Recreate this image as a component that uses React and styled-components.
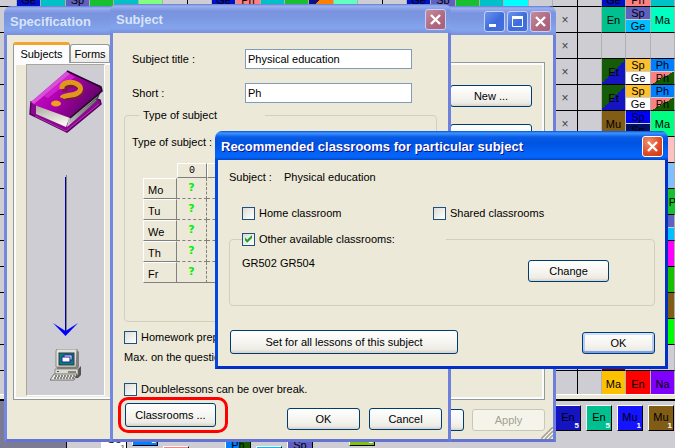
import React from 'react';
import styled, { createGlobalStyle, css } from 'styled-components';

const GlobalStyle = createGlobalStyle`
    * {
        box-sizing: border-box;
    }
    body {
        margin: 0;
        overflow: hidden;
    }
    body, button, input {
        font-family: "Liberation Sans", Arial, sans-serif;
        font-size: 11px;
        line-height: 16px;
        color: #000;
    }
`;

const Desktop = styled.div`
    position: relative;
    display: flex;
    flex-direction: column;
    height: 100vh;
    overflow: hidden;
    background-color: #cecdd3;
`;

/* ---------- timetable behind the windows ---------- */

const TimetablePane = styled.div`
    flex: 1;
    min-height: 0;
    overflow: hidden;
`;

const Timetable = styled.table`
    table-layout: fixed;
    border-collapse: separate;
    border-spacing: 0;
    width: 675px;
    margin-top: -19px;
`;

const Slot = styled.td`
    height: 26px;
    padding: 0;
    border-bottom: 1px solid #000;
    border-right: 1px solid ${({dayEnd}) => dayEnd ? "#000" : "#b0b0b0"};
    font-size: 12px;
    color: #444;
    text-align: center;
`;

const Lesson = styled.div`
    display: flex;
    flex-direction: column;
    gap: 1px;
    width: ${({wide}) => wide ? "49px" : "auto"};
    height: 25px;
`;

const Part = styled.div`
    flex: 1;
    min-height: 0;
    display: flex;
    align-items: center;
    justify-content: center;
    background: ${({fill}) => fill};
    font-size: 11px;
    line-height: 12px;
    color: #000;
`;

const Splitter = styled.div`
    height: 7px;
    background-color: #ece9d8;
    border-top: 1px solid #fff;
    border-bottom: 2px solid #000;
`;

const Tray = styled.div`
    display: flex;
    height: 47px;
    overflow: hidden;
`;

const TrayMargin = styled.div`
    width: 67px;
    background-color: #7b7b94;
    border-right: 1px solid #000;
`;

const CardRow = styled.div`
    display: flex;
    gap: 5px;
    padding: 0 1px 0 34px;
    flex: ${({grow}) => grow ? 1 : "none"};
`;

const CardBox = styled.div`
    flex: none;
    position: relative;
    width: 26px;
    height: 26px;
    margin-top: ${({drop}) => drop}px;
    padding-bottom: 2px;
    display: flex;
    align-items: center;
    justify-content: center;
    background: ${({fill}) => fill};
    border: 1px solid #fff;
    border-right-color: #000;
    border-bottom-color: #000;
`;

const Count = styled.span`
    position: absolute;
    right: 1px;
    bottom: 0;
    font-size: 8px;
    font-weight: bold;
    line-height: 8px;
    color: ${({dark}) => dark ? "#808080" : "#fff"};
`;

const CardGap = styled.div`
    width: 26px;
`;

/* ---------- window parts ---------- */

const Window = styled.section`
    position: absolute;
    left: ${({x}) => x}px;
    top: ${({y}) => y}px;
    width: ${({w}) => w}px;
    height: ${({h}) => h}px;
    display: flex;
    flex-direction: column;
`;

const TitleBar = styled.header`
    display: flex;
    align-items: center;
    gap: 2px;
    height: 29px;
    flex: none;
    padding: 2px 5px 0 6px;
    border-radius: 7px 7px 0 0;
    background: ${({active}) => active
        ? "linear-gradient(#0a4fd0 0, #3c96ff 2px, #0a5ce6 6px, #0053e1 12px, #0462f6 22px, #0466fb 26px, #0043c8 29px)"
        : "linear-gradient(#6478d8 0, #9ab2ee 2px, #7a93de 7px, #7b97e2 14px, #83a4ec 24px, #7a8fdc 29px)"};
`;

const Title = styled.h1`
    flex: 1;
    margin: 0;
    font-size: 13px;
    font-weight: bold;
    line-height: 20px;
    white-space: nowrap;
    color: ${({active}) => active ? "#fff" : "#d8e4f8"};
    text-shadow: ${({active}) => active ? "1px 1px #0f1089" : "none"};
`;

const captionColors = {
    close: "radial-gradient(circle at 30% 25%, #f0906c, #de4a26 60%, #c43a14)",
    closeOff: "linear-gradient(135deg, #c48c9c, #b06880 60%, #a86078)",
    plain: "linear-gradient(135deg, #6c94ee, #3c6cdc 55%, #4470dc)",
};

const CaptionButton = styled.button`
    width: 21px;
    height: 21px;
    padding: 0;
    display: flex;
    align-items: center;
    justify-content: center;
    border: 1px solid ${({kind}) => kind === "close" ? "#fff" : "#c4d0f4"};
    border-radius: 3px;
    background: ${({kind}) => captionColors[kind]};
`;

const WindowBody = styled.div`
    flex: 1;
    min-height: 0;
    display: flex;
    flex-direction: column;
    padding: ${({pad}) => pad};
    background-color: #ece9d8;
    border: solid ${({active}) => active ? "#0148e0" : "#7488e0"};
    border-width: 0 3px 3px;
    border-right-color: ${({active}) => active ? "#0030c8" : "#6c80dc"};
    border-bottom-color: ${({active}) => active ? "#0030c8" : "#6474d0"};
`;

const Button = styled.button`
    width: ${({w}) => w || 73}px;
    height: ${({tall}) => tall ? 24 : 22}px;
    padding: 0;
    border: 1px solid #003c74;
    border-radius: 3px;
    background: linear-gradient(#fff, #f4f3ee 60%, #ecebe6 85%, #d8d0c4);
    white-space: nowrap;
    ${({primary}) => primary && css`
        box-shadow: inset 0 2px #cee0fc, inset 0 -2px #7ea0e4, inset 2px 0 #b4ccf6, inset -2px 0 #b4ccf6;
    `}
    &:disabled {
        color: #a1a192;
        border-color: #c9c7ba;
        background: #f5f4ea;
    }
`;

const CheckLabel = styled.label`
    display: flex;
    align-items: center;
    gap: 4px;
    height: 16px;
    width: ${({w}) => w ? w + "px" : "auto"};
    white-space: nowrap;
`;

const CheckBox = styled.input.attrs({ type: "checkbox" })`
    appearance: none;
    flex: none;
    width: 13px;
    height: 13px;
    margin: 0;
    border: 1px solid #1c5180;
    background: linear-gradient(135deg, #dcdcd7, #fff);
    &:checked::after {
        content: "";
        display: block;
        width: 11px;
        height: 11px;
        background-color: #21a121;
        clip-path: polygon(18% 36%, 38% 56%, 82% 14%, 82% 42%, 38% 84%, 18% 62%);
    }
`;

const Group = styled.fieldset`
    min-width: 0;
    height: ${({h}) => h}px;
    margin: 0;
    padding: 0 10px 0 ${({indent}) => indent}px;
    border: 1px solid #d0d0bf;
    border-radius: 4px;
`;

const Legend = styled.legend`
    width: ${({w}) => w}px;
    height: 16px;
    margin-left: ${({shift}) => shift}px;
    padding: 0 0 0 ${({inset}) => inset || 0}px;
`;

/* ---------- specification window ---------- */

const Tabs = styled.div`
    display: flex;
    align-items: flex-end;
    height: 20px;
    flex: none;
`;

const Tab = styled.button`
    position: relative;
    height: ${({selected}) => selected ? 21 : 18}px;
    width: ${({selected}) => selected ? 57 : 40}px;
    margin-bottom: ${({selected}) => selected ? -1 : 0}px;
    padding: 0;
    border: 1px solid #919b9c;
    border-bottom: none;
    border-top: ${({selected}) => selected ? "3px solid #f4a42c" : "1px solid #919b9c"};
    border-radius: 3px 3px 0 0;
    background: ${({selected}) => selected ? "#fcfcfe" : "linear-gradient(#fff, #ecebe6)"};
`;

const Panel = styled.div`
    flex: 1;
    min-height: 0;
    display: flex;
    justify-content: space-between;
    padding: 1px 12px 3px;
    border: 1px solid #919b9c;
    box-shadow: inset 0 0 0 2px #fcfcfe;
`;

const Art = styled.div`
    width: 79px;
    display: flex;
    flex-direction: column;
    align-items: center;
    background-color: #cecdd3;
    border-left: 1px solid #aca899;
    border-top: 1px solid #aca899;
    border-right: 1px solid #fff;
    border-bottom: 1px solid #fff;
`;

const ArrowIcon = styled.svg`
    margin: 38px 0 13px;
`;

const SideButtons = styled.div`
    display: flex;
    flex-direction: column;
    gap: 17px;
    padding-top: 21px;
`;

const Footer = styled.footer`
    display: flex;
    align-items: flex-end;
    gap: ${({gap}) => gap}px;
    justify-content: ${({between}) => between ? "space-between" : "flex-end"};
    padding: ${({pad}) => pad};
`;

const Grip = styled.svg`
    position: absolute;
    right: 3px;
    bottom: 3px;
`;

/* ---------- subject window ---------- */

const Form = styled.div`
    display: flex;
    flex-direction: column;
    padding: 0 11px;
`;

const Field = styled.div`
    display: flex;
    align-items: center;
    height: 20px;
    margin-bottom: ${({gap}) => gap}px;
    padding-left: 8px;
`;

const FieldLabel = styled.label`
    width: 113px;
`;

const TextBox = styled.input`
    width: 167px;
    height: 20px;
    padding: 0 2px;
    border: 1px solid #7f9db9;
    background-color: #fff;
`;

const Line = styled.div`
    margin: ${({space}) => space};
    white-space: nowrap;
`;

const DayTable = styled.table`
    table-layout: fixed;
    width: 154px;
    margin-left: 11px;
    border-collapse: separate;
    border-spacing: 0;
    th, td {
        height: 21px;
        padding: 0;
    }
    thead th, thead td {
        height: 15px;
        font-family: "Liberation Mono", monospace;
        font-size: 10px;
        font-weight: normal;
        line-height: 13px;
    }
    thead th {
        border-top: 1px solid #fff;
        border-left: 1px solid #fff;
        border-right: 1px solid #808080;
        border-bottom: 1px solid #808080;
    }
    tbody th {
        padding: 2px 0 0 4px;
        font-size: 11px;
        font-weight: normal;
        text-align: left;
        border-top: 1px solid #fff;
        border-left: 1px solid #fff;
        border-right: 1px solid #808080;
        border-bottom: 1px solid #808080;
    }
    tbody td {
        font-family: "DejaVu Sans", sans-serif;
        font-size: 11px;
        font-weight: bold;
        line-height: 14px;
        text-align: center;
        color: #00f000;
        border-right: 1px dashed #808080;
        border-bottom: 1px dashed #808080;
    }
    tbody tr:last-child td {
        border-bottom-style: solid;
    }
`;

const Marked = styled.div`
    padding: 3px 9px 3px 4px;
    border: 3px solid #f00;
    border-radius: 10px;
`;

const Actions = styled.div`
    display: flex;
    gap: 9px;
    padding-bottom: 3px;
`;

/* ---------- classrooms dialog ---------- */

const Row = styled.div`
    display: flex;
    padding: ${({pad}) => pad || 0};
`;

const Caption = styled.span`
    width: 55px;
`;

const GroupRow = styled.div`
    display: flex;
    justify-content: space-between;
    align-items: flex-start;
    padding: 8px 35px 0 0;
`;

const Change = styled.div`
    padding-top: 5px;
`;

const CloseGlyph = () => (
    <svg width="15" height="15" viewBox="0 0 15 15">
        <path d="M3 3 L12 12 M12 3 L3 12" stroke="#fff" strokeWidth="2.4" />
    </svg>
);

const MinGlyph = () => (
    <svg width="15" height="15" viewBox="0 0 15 15">
        <rect x="2" y="10" width="7" height="3" fill="#fff" />
    </svg>
);

const MaxGlyph = () => (
    <svg width="15" height="15" viewBox="0 0 15 15">
        <path d="M2.5 3 V12.5 H12.5 V3" fill="none" stroke="#fff" />
        <rect x="2" y="2" width="11" height="3" fill="#fff" />
    </svg>
);

const Book = () => (
    <svg width="77" height="72" viewBox="7 5 77 72">
        <defs>
            <linearGradient id="cover" x1="0" y1="0" x2="1" y2="0.5">
                <stop offset="0.1" stopColor="#c814c8" />
                <stop offset="0.5" stopColor="#b000b0" />
                <stop offset="1" stopColor="#5c0464" />
            </linearGradient>
            <linearGradient id="edge" x1="0" y1="1" x2="1" y2="0">
                <stop offset="0" stopColor="#d8d8d4" />
                <stop offset="0.4" stopColor="#8c8c8c" />
                <stop offset="1" stopColor="#2c2c30" />
            </linearGradient>
            <linearGradient id="pages" x1="0" y1="0" x2="0.4" y2="1">
                <stop offset="0" stopColor="#a8a8a0" />
                <stop offset="1" stopColor="#f4f4ec" />
            </linearGradient>
        </defs>
        <path d="M11 42 L10 54 L47 72 L81 44 L80 40 L74 38 Z" fill="#8c0890" stroke="#54045c" strokeWidth="1.5" />
        <path d="M15 56 L46 71 L79 44" fill="none" stroke="#c030c0" strokeWidth="1" />
        <path d="M16 45 L16 54 L46 67 L50 56 Z" fill="url(#pages)" />
        <path d="M49 57 L81 31 L77 41 L47 67 Z" fill="url(#edge)" />
        <path d="M50 60 L77 37 M49 63 L76 40" stroke="#a4a4a0" strokeWidth="0.7" />
        <path d="M47 11 L11 42 L17 46 L50 58 L82 31 L81 26 Z" fill="url(#cover)" />
        <path d="M47 11 L11 42 L14 44 L50 14 Z" fill="#d850d8" />
        <path d="M24 36 L50 14 L55 17 L28 38 Z" fill="#dc2cdc" opacity="0.7" />
        <path d="M47 11 L81 27 L82 31 L50 58" fill="none" stroke="#28042c" strokeWidth="1.6" />
        <path d="M43 30 C42 24 50 22 56 24 C63 27 60 34 51 35 C46 36 43 36 42 38" fill="none" stroke="#7c1848" strokeWidth="5" transform="translate(2 2)" />
        <path d="M42 29 C41 22 51 21 57 24 C64 28 60 34 51 35 C46 36 43 36 42 38" fill="none" stroke="#e0981c" strokeWidth="5" />
        <ellipse cx="36" cy="43.5" rx="5" ry="3" fill="#f0a018" />
    </svg>
);

const Computer = () => (
    <svg width="32" height="32" viewBox="0 0 32 32">
        <path d="M7 1 H27 L29 3 V18 L27 20 H7 Z" fill="#808080" />
        <path d="M7 0 L27 0 L26 18 H6 V2 Z" fill="#e4e2dc" stroke="#777" strokeWidth="0.8" />
        <rect x="9" y="4" width="15" height="12" fill="#008080" stroke="#333" />
        <rect x="14" y="6" width="8" height="5" fill="#fff" stroke="#2020a0" />
        <rect x="12" y="8" width="8" height="5" fill="#fff" stroke="#2020a0" />
        <path d="M6 20 H28 L31 17 V26 L28 29 H5 Z" fill="#55554f" />
        <path d="M5 20 H28 V26 H5 Z" fill="#dcdad0" stroke="#777" strokeWidth="0.7" />
        <rect x="7" y="22" width="2" height="1" fill="#0a8030" />
        <path d="M18 23 H26" stroke="#333" />
        <path d="M4 25 H27 L24 31 H0 Z" fill="#eceae2" stroke="#555" strokeWidth="0.8" />
        <path d="M5 27 H25 M4 29 H24" stroke="#222" strokeWidth="1" strokeDasharray="2 1" />
    </svg>
);

const TitleButton = ({ kind, label, children }) => (
    <CaptionButton kind={kind} aria-label={label}>{children}</CaptionButton>
);

const DAY_COLUMNS = [24, 25, 24, 24, 25, 24, 25, 24];
const columns = [17, ...DAY_COLUMNS, ...DAY_COLUMNS, ...DAY_COLUMNS, 24, 25, 24];

const ET = "linear-gradient(135deg, #145c08 50%, #1414c0 50%)";
const PH = "linear-gradient(150deg, #ff8080 50%, #145c00 50%)";

// a lesson is a list of [name, colour] parts, one above the other
const topRow = {
    1: [["", "#0010c8"], ["Ge", "#0010c8"]],
    2: [["", "#00c0c8"]],
    3: [["", "#6060c0"], ["Sp", "#6060c0"]],
    4: [["", "#18c030"]],
    5: [["", "#00c0c8"]],
    6: [["", "#80ff80"]],
    9: [["", "#0010c8"], ["Ge", "#0010c8"]],
    10: [["", "#ff8080"], ["Ph", "#ff8080"]],
    11: [["", "#00c0c8"]],
    12: [["", "#18c030"]],
    13: [["", "linear-gradient(135deg, #101080 60%, #ff8000 60%)"]],
    14: [["", "#60ffc0"]],
    17: [["", "#0010c8"], ["Ge", "#0010c8"]],
    18: [["", "#6060c0"], ["Sb", "#6060c0"]],
    19: [["", "#18c030"]],
    20: [["", "#00c0c8"]],
    21: [["", "#00ffff"]],
    25: [["", "#0010c8"], ["Ge", "#0010c8"]],
    26: [["", "#ff8080"], ["Ph", "#ff8080"]],
    27: [["", "#00c0c8"]],
};

const rows = [
    topRow,
    { 25: [["En", "#00c090"]], 26: [["Sp", "#6060c0"], ["Ge", "#00c0ff"]], 27: [["Ma", "#00ffc0"]] },
    {},
    { 25: [["Et", ET]], 26: [["Sp", "#ffc030"], ["Ge", "#fff"]], 27: [["Ph", "#0080ff"], ["Ph", PH]] },
    { 25: [["Et", ET]], 26: [["Sp", "#ffc030"], ["Ge", "#fff"]], 27: [["Ph", "#0080ff"], ["Ph", PH]] },
    { 25: [["Mu", "#805c14"]], 26: [["Sp", "#0000ff"], ["Sp", "#001060"]], 27: [["Ma", "#00ff80"]] },
    { 27: [["", "#ffc0c0"]] },
    { 27: [["", "#80c0ff"]] },
    { 27: [["Pa", "#18c030"]] },
    { 27: [["", "#6060c0"], ["", "#00c0ff"]] },
    { 27: [["", "#ff00ff"]] },
    { 27: [["", "#18c000"]] },
    { 27: [["", "#805c14"]] },
    { 27: [["", "#00ff00"]] },
    { 25: [["", "#800000"]] },
    { 25: [["Ma", "#ffc000"]], 26: [["En", "#ff0000"]], 27: [["Na", "#8000ff"]] },
];

const looseCards = [
    { name: "Ge", fill: "#fff", count: 1, drop: 26, dark: true },
    { name: "", fill: "#0080ff", count: 2, drop: 19 },
    { name: "", fill: PH, drop: 45 },
    null,
    { name: "Ph", fill: "linear-gradient(90deg, #0080ff 60%, #145c00 60%)", drop: 32 },
    { name: "", fill: "#00c0ff", drop: 45 },
    { name: "Sp", fill: "#6060c0", count: 1, drop: 32 },
    null,
    { name: "Sp", fill: "#80c010", count: 1, drop: 19 },
];

const rightCards = [
    { name: "En", fill: "#1414c0", count: 5 },
    { name: "En", fill: "#00c090", count: 5 },
    { name: "Mu", fill: "#1414ff", count: 1 },
    { name: "Mu", fill: "#805c14", count: 1 },
];

const Card = ({ name, fill, count, dark, drop = 4 }) => (
    <CardBox fill={fill} drop={drop}>
        {name}
        {count && <Count dark={dark}>{count}</Count>}
    </CardBox>
);

const Board = () => (
    <>
        <TimetablePane>
            <Timetable>
                <colgroup>
                    {columns.map((w, i) => <col key={i} width={w} />)}
                </colgroup>
                <tbody>
                    {rows.map((row, r) => (
                        <tr key={r}>
                            {columns.map((w, c) => (
                                <Slot key={c} dayEnd={c > 0 && c % 8 === 7}>
                                    {row[c] && (
                                        <Lesson wide={row[c][0][0] === "Pa"}>
                                            {row[c].map(([name, fill], i) => (
                                                <Part key={i} fill={fill}>{name}</Part>
                                            ))}
                                        </Lesson>
                                    )}
                                    {c === 23 && r > 0 && r < 6 && "×"}
                                </Slot>
                            ))}
                        </tr>
                    ))}
                </tbody>
            </Timetable>
        </TimetablePane>
        <Splitter />
        <Tray>
            <TrayMargin />
            <CardRow grow>
                {looseCards.map((card, i) => card ? <Card key={i} {...card} /> : <CardGap key={i} />)}
            </CardRow>
            <CardRow>
                {rightCards.map((card, i) => <Card key={i} {...card} />)}
            </CardRow>
        </Tray>
    </>
);

const SpecificationWindow = () => (
    <Window x={4} y={6} w={552} h={436}>
        <TitleBar>
            <Title>Specification</Title>
            <TitleButton kind="plain" label="Minimize"><MinGlyph /></TitleButton>
            <TitleButton kind="plain" label="Maximize"><MaxGlyph /></TitleButton>
            <TitleButton kind="closeOff" label="Close"><CloseGlyph /></TitleButton>
        </TitleBar>
        <WindowBody pad="7px 8px 8px 6px">
            <Tabs>
                <Tab selected>Subjects</Tab>
                <Tab>Forms</Tab>
            </Tabs>
            <Panel>
                <Art>
                    <Book />
                    <ArrowIcon width="27" height="161" viewBox="0 0 27 161">
                        <path d="M14.5 0 V156" stroke="#808080" />
                        <path d="M13.5 2 V156" stroke="#0000a0" />
                        <path d="M1 148 L13.5 156 L26 148 L13.5 161 Z" fill="#0000ff" />
                    </ArrowIcon>
                    <Computer />
                </Art>
                <SideButtons>
                    <Button w={82}>New ...</Button>
                    <Button w={82}>Edit ...</Button>
                </SideButtons>
            </Panel>
            <Footer gap={8} pad="9px 0 0">
                <Button>Cancel</Button>
                <Button disabled>Apply</Button>
            </Footer>
        </WindowBody>
        <Grip width="12" height="12" viewBox="0 0 12 12">
            <path d="M0 12 L12 0 M4 12 L12 4 M8 12 L12 8" stroke="#a8a594" strokeWidth="1.6" />
            <path d="M2 12 L12 2 M6 12 L12 6" stroke="#fff" />
        </Grip>
    </Window>
);

const SubjectWindow = () => (
    <Window x={110} y={4} w={341} h={438}>
        <TitleBar>
            <Title>Subject</Title>
            <TitleButton kind="closeOff" label="Close"><CloseGlyph /></TitleButton>
        </TitleBar>
        <WindowBody pad="16px 0 0">
            <Form>
                <Field gap={14}>
                    <FieldLabel htmlFor="title">Subject title :</FieldLabel>
                    <TextBox id="title" defaultValue="Physical education" />
                </Field>
                <Field gap={4}>
                    <FieldLabel htmlFor="short">Short :</FieldLabel>
                    <TextBox id="short" defaultValue="Ph" />
                </Field>
                <Group h={215} indent={7}>
                    <Legend w={126} shift={7} inset={4}>Type of subject</Legend>
                    <Line space="11px 0 13px">Type of subject :</Line>
                    <DayTable>
                        <colgroup>
                            <col width="34" />
                            <col width="30" />
                            <col width="30" />
                            <col width="30" />
                            <col width="30" />
                        </colgroup>
                        <thead>
                            <tr>
                                <td />
                                {[0, 1, 2, 3].map((n) => <th key={n}>{n}</th>)}
                            </tr>
                        </thead>
                        <tbody>
                            {["Mo", "Tu", "We", "Th", "Fr"].map((day) => (
                                <tr key={day}>
                                    <th>{day}</th>
                                    {[0, 1, 2, 3].map((n) => <td key={n}>?</td>)}
                                </tr>
                            ))}
                        </tbody>
                    </DayTable>
                </Group>
                <Line space="7px 0 0">
                    <CheckLabel><CheckBox />Homework preparation</CheckLabel>
                </Line>
                <Line space="4px 0 16px">Max. on the question marked</Line>
                <CheckLabel><CheckBox />Doublelessons can be over break.</CheckLabel>
            </Form>
            <Footer between pad="0 6px 0 5px">
                <Marked>
                    <Button w={91} tall>Classrooms ...</Button>
                </Marked>
                <Actions>
                    <Button>OK</Button>
                    <Button>Cancel</Button>
                </Actions>
            </Footer>
        </WindowBody>
    </Window>
);

const ClassroomsDialog = () => (
    <Window x={215} y={131} w={453} h={238}>
        <TitleBar active>
            <Title active>Recommended classrooms for particular subject</Title>
            <TitleButton kind="close" label="Close"><CloseGlyph /></TitleButton>
        </TitleBar>
        <WindowBody active pad="9px 10px 0 11px">
            <Row>
                <Caption>Subject :</Caption>
                <span>Physical education</span>
            </Row>
            <Row pad="20px 0 10px 13px">
                <CheckLabel w={191}><CheckBox />Home classroom</CheckLabel>
                <CheckLabel><CheckBox />Shared classrooms</CheckLabel>
            </Row>
            <Group h={75} indent={12}>
                <Legend w={204} shift={12 - 12}>
                    <CheckLabel><CheckBox defaultChecked />Other available classrooms:</CheckLabel>
                </Legend>
                <GroupRow>
                    <span>GR502 GR504</span>
                    <Change>
                        <Button w={81}>Change</Button>
                    </Change>
                </GroupRow>
            </Group>
            <Footer between pad="24px 0 0 1px">
                <Button w={228} tall>Set for all lessons of this subject</Button>
                <Button primary>OK</Button>
            </Footer>
        </WindowBody>
    </Window>
);

const App = () => {
    return (
    <>
        <GlobalStyle />
        <Desktop>
            <Board />
            <SpecificationWindow />
            <SubjectWindow />
            <ClassroomsDialog />
        </Desktop>
    </>
    );
};

export default App;
